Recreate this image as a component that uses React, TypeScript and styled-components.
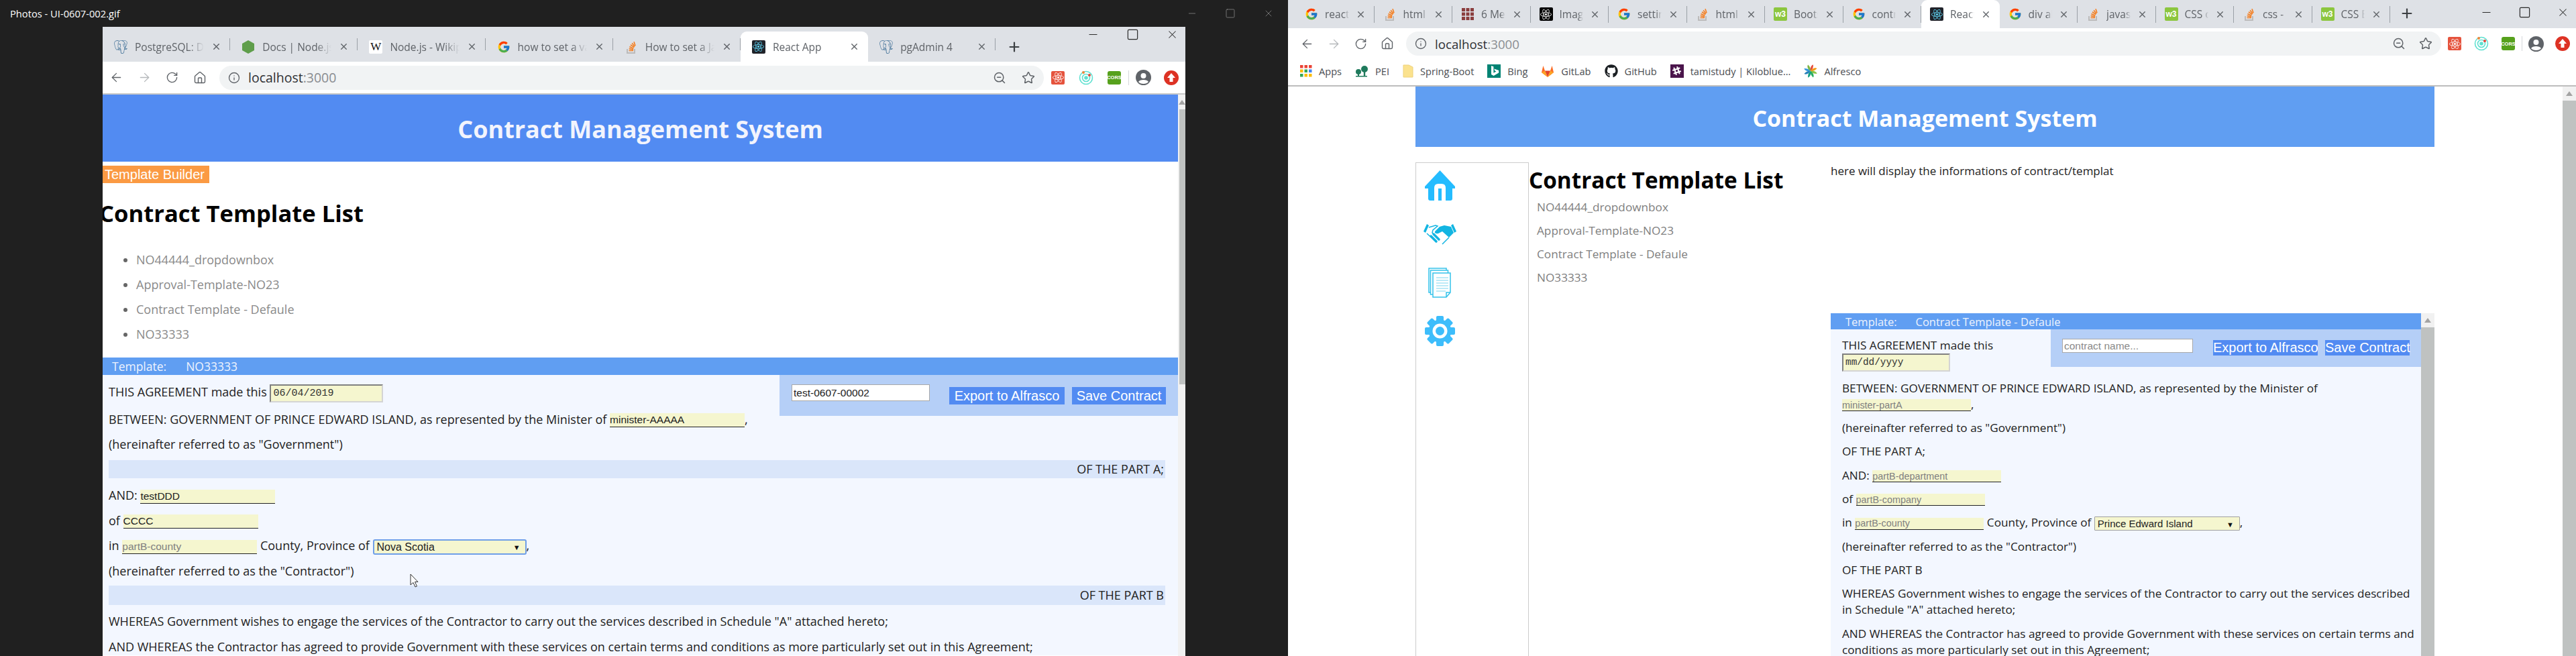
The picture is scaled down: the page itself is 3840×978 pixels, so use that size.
import React from 'react';
import styled, { createGlobalStyle } from 'styled-components';
import { ArrowLeft, ArrowRight, Home, Info, Minus, Plus, RotateCw, Square, Star, X, ZoomOut } from 'lucide-react';
import { FaGithub, FaReact, FaSlackHash } from 'react-icons/fa';
import { FcGoogle } from 'react-icons/fc';
import { SiPostgresql } from 'react-icons/si';

const UI_FONT = '"Open Sans", "Noto Sans", sans-serif';
const FORM_FONT = '"Liberation Sans", Arial, sans-serif';

const GlobalStyle = createGlobalStyle`
  html, body {
    margin: 0;
    overflow: hidden;
    background: #202020;
  }
  * {
    box-sizing: border-box;
  }
`;

const Screen = styled.div`
  display: flex;
  width: 3840px;
  height: 978px;
  overflow: hidden;
  font-family: ${UI_FONT};
`;

const Desktop = styled.div<{ $dark?: boolean }>`
  display: flex;
  flex-direction: column;
  width: 1920px;
  height: 978px;
  overflow: hidden;
  background: ${(p) => (p.$dark ? '#202020' : '#ffffff')};
`;

/* ---- viewer title bar ---- */
const PhotoBar = styled.div`
  display: flex;
  align-items: center;
  flex: none;
  height: 40px;
  padding: 0 21px 0 15px;
  color: #ffffff;
  font-size: 14.7px;
`;

const PhotoTitle = styled.span`
  flex: 1;
`;

const PhotoControls = styled.div`
  display: flex;
  gap: 41px;
  color: #9a9a9a;
`;

const BrowserFrame = styled.div`
  display: flex;
  flex: 1;
  flex-direction: column;
  min-height: 0;
  width: 1614px;
  margin-left: 153px;
  background: #ffffff;
`;

/* ---- tab strip ---- */
const TabStrip = styled.div<{ $wide?: boolean }>`
  display: flex;
  align-items: flex-end;
  flex: none;
  height: ${(p) => (p.$wide ? '42px' : '52px')};
  padding-left: ${(p) => (p.$wide ? '12px' : '0')};
  background: #dee1e6;
`;

const Tab = styled.div<{ $active?: boolean; $w: number; $compact?: boolean }>`
  position: relative;
  display: flex;
  align-items: center;
  flex: none;
  width: ${(p) => p.$w}px;
  height: ${(p) => (p.$compact ? '42px' : '45px')};
  padding: 0 13px 0 ${(p) => (p.$compact ? '13px' : '17px')};
  gap: ${(p) => (p.$compact ? '10px' : '11px')};
  border-radius: 9px 9px 0 0;
  background: ${(p) => (p.$active ? '#ffffff' : 'transparent')};
  color: #5f6368;
  font-size: 15.5px;

  &::after {
    content: ${(p) => (p.$active ? 'none' : '""')};
    position: absolute;
    right: 0;
    top: ${(p) => (p.$compact ? '9px' : '10px')};
    bottom: ${(p) => (p.$compact ? '8px' : '17px')};
    width: 1px;
    background: #9aa0a6;
  }
`;

const TabLabel = styled.span`
  flex: 1;
  min-width: 0;
  overflow: hidden;
  white-space: nowrap;
  -webkit-mask-image: linear-gradient(to right, #000 78%, transparent 100%);
  mask-image: linear-gradient(to right, #000 78%, transparent 100%);
`;

const TabIcon = styled.span`
  display: flex;
  align-items: center;
  justify-content: center;
  flex: none;
  width: 20px;
  height: 20px;
`;

const NewTab = styled.span<{ $left: number }>`
  display: flex;
  align-items: center;
  justify-content: center;
  flex: none;
  width: 46px;
  height: 45px;
  margin-left: ${(p) => p.$left}px;
  color: #3c4043;
`;

const WindowControls = styled.div<{ $top: number; $gap: number }>`
  display: flex;
  align-items: center;
  align-self: flex-start;
  gap: ${(p) => p.$gap}px;
  margin: ${(p) => p.$top}px 10px 0 auto;
  color: #2b2b2b;
`;

/* ---- address bar ---- */
const Toolbar = styled.div<{ $pad: number; $border?: boolean }>`
  display: flex;
  align-items: center;
  flex: none;
  height: ${(p) => (p.$border ? '49px' : '46px')};
  padding-left: ${(p) => p.$pad}px;
  background: #ffffff;
  border-bottom: ${(p) => (p.$border ? '2px solid #c8c8c8' : 'none')};
`;

const NavButton = styled.span<{ $w: number; $faded?: boolean }>`
  display: flex;
  align-items: center;
  justify-content: center;
  flex: none;
  width: ${(p) => p.$w}px;
  color: ${(p) => (p.$faded ? '#b5b8bb' : '#5f6368')};
`;

const Omnibox = styled.div<{ $left: number }>`
  display: flex;
  align-items: center;
  flex: 1;
  height: 36px;
  margin-left: ${(p) => p.$left}px;
  padding: 0 13px;
  gap: 12px;
  border-radius: 18px;
  background: #f1f3f4;
  color: #5f6368;
`;

const UrlText = styled.span<{ $fs: number }>`
  flex: 1;
  color: #8a8d91;
  font-size: ${(p) => p.$fs}px;
  b {
    color: #303134;
    font-weight: 400;
  }
`;

const OmniActions = styled.span<{ $gap: number }>`
  display: flex;
  align-items: center;
  gap: ${(p) => p.$gap}px;
`;

const ExtensionSlot = styled.span<{ $w: number }>`
  display: flex;
  align-items: center;
  justify-content: center;
  flex: none;
  width: ${(p) => p.$w}px;
`;

const ToolbarDivider = styled.span`
  flex: none;
  width: 1px;
  height: 22px;
  background: #d5d7da;
`;

/* ---- bookmarks ---- */
const BookmarkBar = styled.div`
  display: flex;
  align-items: center;
  flex: none;
  gap: 20px;
  height: 41px;
  padding: 0 0 4px 18px;
  border-bottom: 2px solid #bdbdbd;
  color: #4a4d51;
  font-size: 14.6px;
`;

const Bookmark = styled.span`
  display: flex;
  align-items: center;
  gap: 10px;
`;

/* ---- page ---- */
const PageRow = styled.div`
  display: flex;
  flex: 1;
  min-height: 0;
`;

const PageContent = styled.div<{ $gutter?: number }>`
  position: relative;
  flex: 1;
  min-width: 0;
  overflow: hidden;
  padding-left: ${(p) => p.$gutter || 0}px;
`;

const Scrollbar = styled.div<{ $w: number }>`
  display: flex;
  flex-direction: column;
  flex: none;
  width: ${(p) => p.$w}px;
  background: #f1f1f1;
`;

const ScrollArrow = styled.span<{ $h: number }>`
  display: flex;
  align-items: center;
  justify-content: center;
  flex: none;
  height: ${(p) => p.$h}px;
  &::before {
    content: '';
    border-left: 5px solid transparent;
    border-right: 5px solid transparent;
    border-bottom: 7px solid #a3a3a3;
  }
`;

const ScrollThumb = styled.span<{ $h?: number; $inset?: number }>`
  flex: ${(p) => (p.$h ? 'none' : '1')};
  height: ${(p) => (p.$h ? `${p.$h}px` : 'auto')};
  margin-left: ${(p) => p.$inset || 0}px;
  background: #bfc2c1;
`;

const SiteHeader = styled.header<{ $h: number; $bg: string; $w?: number; $fs: number; $ink: string }>`
  display: flex;
  align-items: center;
  justify-content: center;
  height: ${(p) => p.$h}px;
  width: ${(p) => (p.$w ? `${p.$w}px` : 'auto')};
  padding-top: 3px;
  background: ${(p) => p.$bg};
  color: ${(p) => p.$ink};
  font-size: ${(p) => p.$fs}px;
  font-weight: 700;
`;

const BuilderTag = styled.div`
  display: flex;
  align-items: center;
  width: 159px;
  height: 26px;
  margin-top: 6px;
  padding-left: 3px;
  background: #fb9a43;
  color: #ffffff;
  font-family: ${FORM_FONT};
  font-size: 20px;
`;

const ListTitle = styled.h1<{ $fs: number }>`
  margin: 0;
  color: #000000;
  font-size: ${(p) => p.$fs}px;
  font-weight: 700;
  line-height: 40px;
  white-space: nowrap;
`;

const DarkTitle = styled(ListTitle)`
  margin: 25px 0 0 -5px;
`;

const BulletList = styled.ul`
  margin: 31px 0 16px;
  padding: 0 0 0 50px;
  list-style: disc;
  color: #8a8a8a;
  font-size: 18px;
  li {
    height: 37px;
    line-height: 37px;
  }
  li::marker {
    color: #666666;
  }
`;

const PlainList = styled.ul`
  margin: 2.5px 0 0;
  padding: 0 0 0 12px;
  list-style: none;
  color: #808080;
  font-size: 17.2px;
  li {
    height: 35px;
    line-height: 35px;
  }
`;

const TemplateBar = styled.div<{ $h: number; $pad: number; $gap: number; $fs: number }>`
  display: flex;
  align-items: center;
  gap: ${(p) => p.$gap}px;
  height: ${(p) => p.$h}px;
  padding-left: ${(p) => p.$pad}px;
  background: #609ef2;
  color: #eef3fd;
  font-size: ${(p) => p.$fs}px;
  white-space: pre;
`;

const Sheet = styled.div<{ $fs: number; $lh: number; $gap: number; $pad: string }>`
  padding: ${(p) => p.$pad};
  background: #f3f7ff;
  color: #222222;
  font-size: ${(p) => p.$fs}px;
  line-height: ${(p) => p.$lh}px;

  p {
    margin: 0 0 ${(p) => p.$gap}px;
  }
`;

const LeadLine = styled.p`
  && {
    margin-bottom: 15px;
  }
`;

const ExportPanel = styled.div<{ $w: number; $h: number; $margin: string; $pad: string }>`
  float: right;
  display: flex;
  align-items: flex-start;
  width: ${(p) => p.$w}px;
  height: ${(p) => p.$h}px;
  margin: ${(p) => p.$margin};
  padding: ${(p) => p.$pad};
  background: #b5cff7;
`;

const NameInput = styled.input<{ $w: number; $h: number }>`
  flex: none;
  width: ${(p) => p.$w}px;
  height: ${(p) => p.$h}px;
  padding: 0 2px;
  border: 1px solid #a9a9a9;
  background: #ffffff;
  color: #222222;
  font-family: ${FORM_FONT};
  font-size: 15.5px;
  &::placeholder {
    color: #8a8a8a;
  }
`;

const ActionButton = styled.button<{ $w: number; $h: number; $left: number; $top: number }>`
  flex: none;
  width: ${(p) => p.$w}px;
  height: ${(p) => p.$h}px;
  margin: ${(p) => p.$top}px 0 0 ${(p) => p.$left}px;
  padding: 0;
  border: none;
  background: #528bf2;
  color: #ffffff;
  font-family: ${FORM_FONT};
  font-size: 20px;
  white-space: nowrap;
`;

const DateField = styled.input<{ $w: number; $fs: number }>`
  width: ${(p) => p.$w}px;
  height: 27px;
  margin: -2px 0;
  padding: 0 3px;
  vertical-align: middle;
  border: 2px inset #d4d4d4;
  background: #f5f6cf;
  color: #333333;
  font-family: "Liberation Mono", monospace;
  font-size: ${(p) => p.$fs}px;
`;

const BlankField = styled.input<{ $w: number; $small?: boolean }>`
  width: ${(p) => p.$w}px;
  height: ${(p) => (p.$small ? '18px' : '21px')};
  margin: -3px 0;
  padding: 0;
  vertical-align: middle;
  border: none;
  border-bottom: 1px solid #222222;
  background: #f5f6cf;
  color: #222222;
  font-family: ${FORM_FONT};
  font-size: ${(p) => (p.$small ? '14.4px' : '15.5px')};
  &::placeholder {
    color: #808080;
  }
`;

const SelectWrap = styled.span`
  position: relative;
  display: inline-block;
  margin: -3px 0;
  vertical-align: middle;
  line-height: 0;
  &::after {
    content: '▼';
    position: absolute;
    right: 9px;
    top: 50%;
    transform: translateY(-50%);
    color: #111111;
    font-size: 11px;
    line-height: 1;
    pointer-events: none;
  }
`;

const ProvinceSelect = styled.select<{ $w: number; $h: number; $fs: number; $focus?: boolean }>`
  appearance: none;
  width: ${(p) => p.$w}px;
  height: ${(p) => p.$h}px;
  padding: 0 4px;
  border: ${(p) => (p.$focus ? '2px solid #6f9fe8' : '1px solid #a0a0a0')};
  border-radius: ${(p) => (p.$focus ? '3px' : '1px')};
  background: #f5f6cf;
  color: #222222;
  font-family: ${FORM_FONT};
  font-size: ${(p) => p.$fs}px;
`;

const PartStrip = styled.div<{ $h: number; $top: number; $gap: number }>`
  display: flex;
  align-items: center;
  justify-content: flex-end;
  height: ${(p) => p.$h}px;
  margin: ${(p) => p.$top}px 0 ${(p) => p.$gap}px;
  padding-right: 2px;
  background: #dae6fa;
`;

const Pointer = styled.svg`
  position: absolute;
  left: 458px;
  top: 714px;
`;

/* ---- right hand page ---- */
const PageBody = styled.div`
  display: flex;
  width: 1519px;
  margin-top: 23px;
`;

const SideNav = styled.nav`
  flex: none;
  width: 169px;
  height: 760px;
  border: 1px solid #cccccc;
  border-bottom: none;
`;

const SideItem = styled.span`
  display: flex;
  align-items: center;
  justify-content: center;
  width: 70px;
  height: 72.5px;
  &:first-child {
    margin-top: -3px;
  }
`;

const ListColumn = styled.section`
  flex: none;
  width: 450px;
  padding-top: 6px;
`;

const DetailColumn = styled.section`
  flex: 1;
  min-width: 0;
`;

const DetailNote = styled.div`
  height: 225px;
  color: #222222;
  font-size: 17px;
  line-height: 26px;
`;

const DetailFrame = styled.div`
  display: flex;
  height: 520px;
`;

const DetailPanel = styled.div`
  flex: 1;
  min-width: 0;
`;

/* ---- favicon set ---- */
const FaviconBox = styled.span<{ $bg: string; $ink?: string; $round?: number }>`
  display: flex;
  align-items: center;
  justify-content: center;
  width: 20px;
  height: 20px;
  overflow: hidden;
  border-radius: ${(p) => p.$round ?? 2}px;
  background: ${(p) => p.$bg};
  color: ${(p) => p.$ink || '#ffffff'};
`;

const WikiLetter = styled.span`
  color: #111111;
  font-family: "Liberation Serif", serif;
  font-size: 17px;
`;

const W3Letter = styled.span`
  font-family: ${FORM_FONT};
  font-size: 12px;
  font-weight: 700;
`;

const CorsLetter = styled.span`
  font-family: ${FORM_FONT};
  font-size: 7.5px;
  font-weight: 700;
`;

const Hexagon = () => (
  <svg width="20" height="20" viewBox="0 0 20 20"><path d="M10 0l9 5v10l-9 5-9-5V5z" fill="#5f9e4b" /></svg>
);
const Stack = () => (
  <svg width="20" height="20" viewBox="0 0 20 20">
    <path d="M4 13v6h11v-6" fill="none" stroke="#bcbbbb" strokeWidth="2" />
    <path d="M6.500 15.500h6.500M6.700 12.600l6.400 1.200M7.400 9.600l6 2.600M9 6.800l5.300 3.800M11.200 4.300l3.800 5.100M14 2.300l2 6" stroke="#f48024" strokeWidth="1.700" />
  </svg>
);
const Waffle = () => (
  <svg width="20" height="20" viewBox="0 0 20 20" fill="#8a3d3d">
    {[1, 7.5, 14].flatMap((x) => [1, 7.5, 14].map((y) => <rect key={`${x}-${y}`} x={x} y={y} width="5" height="5" />))}
  </svg>
);
const AppsGrid = () => {
  const tints = ['#ea4335', '#ea4335', '#ea4335', '#fbbc05', '#34a853', '#4285f4', '#34a853', '#fbbc05', '#fbbc05'];
  return (
    <svg width="18" height="18" viewBox="0 0 18 18">
      {tints.map((c, i) => <rect key={i} x={(i % 3) * 6.5} y={Math.floor(i / 3) * 6.5} width="4.5" height="4.5" fill={c} />)}
    </svg>
  );
};
const Trees = () => (
  <svg width="20" height="20" viewBox="0 0 20 20" fill="#1f7a5c">
    <circle cx="14" cy="7" r="5" /><rect x="12.800" y="10" width="2.400" height="8" />
    <circle cx="5" cy="11" r="4" /><rect x="4" y="13" width="2" height="5" /><rect x="1" y="17" width="17" height="1.500" />
  </svg>
);
const Folder = () => (
  <svg width="16" height="20" viewBox="0 0 16 20"><path d="M1 1h8l6 3v15H1z" fill="#fbe28e" stroke="#eed27a" /></svg>
);
const BingMark = () => (
  <svg width="20" height="20" viewBox="0 0 20 20">
    <rect width="20" height="20" fill="#008373" />
    <path d="M6 2l3.400 1.200v9.600l4-2.400-2-1-1.200-3 7 2.500v3.500l-7.600 4.600L6 15z" fill="#ffffff" />
  </svg>
);
const GitlabMark = () => (
  <svg width="20" height="20" viewBox="0 0 20 20">
    <path d="M10 19L1 12l2.400-10 2.600 7.500z" fill="#fc6d26" />
    <path d="M10 19l9-7-2.400-10L14 9.500z" fill="#fc6d26" />
    <path d="M10 19L6 9.500h8z" fill="#e24329" />
    <path d="M10 19L1 12l5-2.500zM10 19l9-7-5-2.500z" fill="#fca326" />
  </svg>
);
const Pinwheel = () => {
  const tints = ['#e74c3c', '#f39c12', '#8bc34a', '#27ae60', '#16a085', '#2980b9', '#3498db', '#7cb342'];
  return (
    <svg width="20" height="20" viewBox="-10 -10 20 20">
      {tints.map((c, i) => <path key={i} d="M0 0C-1-5 1-9 4-9.500 4-5 3-2 0 0z" fill={c} transform={`rotate(${i * 45})`} />)}
    </svg>
  );
};
const ReactExt = () => (
  <FaviconBox $bg="#e5533d" $ink="#ffffff"><FaReact size={17} /></FaviconBox>
);
const TargetExt = () => (
  <svg width="22" height="22" viewBox="0 0 22 22" fill="none" stroke="#5fe0d0" strokeWidth="1.600">
    <circle cx="11" cy="11" r="9.500" /><circle cx="11" cy="11" r="5.500" /><circle cx="11" cy="11" r="2" fill="#5fe0d0" />
    <circle cx="7" cy="3" r="2" fill="#f0873a" stroke="none" /><circle cx="16" cy="7" r="2" fill="#e8473a" stroke="none" />
  </svg>
);
const CorsExt = () => (
  <FaviconBox $bg="#56a11c" $round={3}><CorsLetter>CORS</CorsLetter></FaviconBox>
);
const AvatarExt = () => (
  <svg width="23" height="23" viewBox="0 0 23 23">
    <circle cx="11.500" cy="11.500" r="11.500" fill="#5f6368" />
    <circle cx="11.500" cy="9" r="4" fill="#ffffff" />
    <path d="M4 18c2-4 13-4 15 0-3 4-12 4-15 0z" fill="#ffffff" />
  </svg>
);
const UploadExt = () => (
  <svg width="22" height="22" viewBox="0 0 22 22">
    <circle cx="11" cy="11" r="11" fill="#dd3224" />
    <path d="M11 4l6 7h-3.500v6h-5v-6H5z" fill="#ffffff" />
  </svg>
);

const HomeGlyph = () => (
  <svg width="45" height="45" viewBox="0 0 45 45">
    <path d="M22.500 0L45 24v3h-4v15q0 3-3 3H8q-3 0-3-3V27H0v-3z" fill="#24bcff" />
    <path d="M14 45V26q0-6 6-6h5q6 0 6 6v19h-6V27h-5v18z" fill="#ffffff" />
  </svg>
);
const ShakeGlyph = () => (
  <svg width="49" height="32" viewBox="0 0 49 32" fill="#12b5e2">
    <path d="M0 12L5 1l3 2-5 11zM49 12L44 1l-3 2 5 11z" />
    <path d="M24 5l7-2 10 2 4 9-7 7-10-9-6 3q-3 1-5-1v-2z" />
    <path d="M8 6l10-3 3 1-7 6-1 4 3 3M5 15l14 13M38 21L28 31" fill="none" stroke="#12b5e2" strokeWidth="1.500" />
    <path d="M11 19l8 8M15 16l8 8" fill="none" stroke="#12b5e2" strokeWidth="3.500" strokeLinecap="round" />
  </svg>
);
const DocsGlyph = () => (
  <svg width="34" height="45" viewBox="0 0 34 45" fill="#ffffff" stroke="#35c2ea" strokeWidth="1.500">
    <rect x="1" y="1" width="26" height="36" />
    <rect x="3.500" y="4" width="26" height="36" />
    <path d="M7 8h26v29l-6 7H7z" />
    <path d="M12 15h18M12 19h18M12 23h18M12 27h18M12 31h18M12 35h14" stroke="#a6e4f5" strokeWidth="1.300" />
    <path d="M27 44v-7h6" fill="none" />
  </svg>
);
const GearGlyph = () => (
  <svg width="45" height="45" viewBox="0 0 45 45">
    {[0, 45, 90, 135].map((r) => <rect key={r} x="17" y="0" width="11" height="45" rx="2" fill="#3dbdfb" transform={`rotate(${r} 22.500 22.500)`} />)}
    <circle cx="22.500" cy="22.500" r="17" fill="#3dbdfb" />
    <circle cx="22.500" cy="22.500" r="11" fill="#ffffff" />
    <circle cx="22.500" cy="22.500" r="6.500" fill="#3dbdfb" />
  </svg>
);

type TabItem = { label: string; icon: React.ReactNode; active?: boolean };

const google = <FcGoogle size={20} />;
const stack = <Stack />;
const w3 = <FaviconBox $bg="#8cc63f"><W3Letter>w3</W3Letter></FaviconBox>;
const atom = <FaviconBox $bg="#20232a" $ink="#61dafb"><FaReact size={17} /></FaviconBox>;
const atomBlack = <FaviconBox $bg="#000000"><FaReact size={17} /></FaviconBox>;
const elephant = <SiPostgresql size={20} color="#336791" />;

const leftTabs: TabItem[] = [
  { label: 'PostgreSQL: Documentation', icon: elephant },
  { label: 'Docs | Node.js', icon: <Hexagon /> },
  { label: 'Node.js - Wikipedia', icon: <FaviconBox $bg="#ffffff"><WikiLetter>W</WikiLetter></FaviconBox> },
  { label: 'how to set a value', icon: google },
  { label: 'How to set a JavaScript', icon: stack },
  { label: 'React App', icon: atom, active: true },
  { label: 'pgAdmin 4', icon: elephant },
];

const rightTabs: TabItem[] = [
  { label: 'react', icon: google },
  { label: 'html - s', icon: stack },
  { label: '6 Methods', icon: <Waffle /> },
  { label: 'Image', icon: atomBlack },
  { label: 'settings', icon: google },
  { label: 'html - s', icon: stack },
  { label: 'Bootstrap', icon: w3 },
  { label: 'contract', icon: google },
  { label: 'React App', icon: atom, active: true },
  { label: 'div align', icon: google },
  { label: 'javascript', icon: stack },
  { label: 'CSS over', icon: w3 },
  { label: 'css - How', icon: stack },
  { label: 'CSS Box', icon: w3 },
];

const Tabs: React.FC<{ items: TabItem[]; w: number; compact?: boolean }> = ({ items, w, compact }) => (
  <>
    {items.map((t, i) => (
      <Tab key={i} $w={w} $active={t.active} $compact={compact}>
        <TabIcon>{t.icon}</TabIcon>
        <TabLabel>{t.label}</TabLabel>
        <X size={15} strokeWidth={2.2} />
      </Tab>
    ))}
  </>
);

type AddressProps = { pad: number; nav: number; ext: number; gap: number; url: number; border?: boolean };

const Address: React.FC<AddressProps> = ({ pad, nav, ext, gap, url, border }) => (
  <Toolbar $pad={pad} $border={border}>
    <NavButton $w={nav}><ArrowLeft size={21} strokeWidth={1.5} /></NavButton>
    <NavButton $w={nav} $faded><ArrowRight size={21} strokeWidth={1.5} /></NavButton>
    <NavButton $w={nav}><RotateCw size={19} strokeWidth={1.7} /></NavButton>
    <NavButton $w={nav}><Home size={20} strokeWidth={1.7} /></NavButton>
    <Omnibox $left={8}>
      <Info size={18} strokeWidth={1.8} />
      <UrlText $fs={url}><b>localhost</b>:3000</UrlText>
      <OmniActions $gap={gap}>
        <ZoomOut size={20} strokeWidth={1.8} />
        <Star size={20} strokeWidth={1.8} />
      </OmniActions>
    </Omnibox>
    <ExtensionSlot $w={ext}><ReactExt /></ExtensionSlot>
    <ExtensionSlot $w={ext}><TargetExt /></ExtensionSlot>
    <ExtensionSlot $w={ext}><CorsExt /></ExtensionSlot>
    <ToolbarDivider />
    <ExtensionSlot $w={ext}><AvatarExt /></ExtensionSlot>
    <ExtensionSlot $w={ext}><UploadExt /></ExtensionSlot>
  </Toolbar>
);

const templateNames = ['NO44444_dropdownbox', 'Approval-Template-NO23', 'Contract Template - Defaule', 'NO33333'];

const LeftWindow: React.FC = () => (
  <Desktop $dark>
    <PhotoBar>
      <PhotoTitle>Photos - UI-0607-002.gif</PhotoTitle>
      <PhotoControls>
        <Minus size={16} strokeWidth={1} />
        <Square size={16} strokeWidth={1} />
        <X size={16} strokeWidth={1} />
      </PhotoControls>
    </PhotoBar>
    <BrowserFrame>
      <TabStrip>
        <Tabs items={leftTabs} w={190.2} />
        <NewTab $left={5}><Plus size={22} strokeWidth={2.4} /></NewTab>
        <WindowControls $top={2} $gap={40}>
          <Minus size={19} strokeWidth={1.5} />
          <Square size={19} strokeWidth={1.5} />
          <X size={19} strokeWidth={1.3} />
        </WindowControls>
      </TabStrip>
      <Address pad={0} nav={41.5} ext={42} gap={23} url={19.5} border />
      <PageRow>
        <PageContent>
          <SiteHeader $h={100} $bg="#528bf2" $fs={36} $ink="#f2f4fd">Contract Management System</SiteHeader>
          <BuilderTag>Template Builder</BuilderTag>
          <DarkTitle $fs={34.6}>Contract Template List</DarkTitle>
          <BulletList>
            {templateNames.map((n) => <li key={n}>{n}</li>)}
          </BulletList>
          <TemplateBar $h={26} $pad={14} $gap={29} $fs={17.5}>
            <span>Template:</span>
            <span>NO33333</span>
          </TemplateBar>
          <Sheet $fs={18} $lh={25} $gap={12.5} $pad="13px 19px 0 9px">
            <ExportPanel $w={594} $h={61} $margin="-13px -19px 0 12px" $pad="14px 0 0 18px">
              <NameInput $w={206} $h={25} defaultValue="test-0607-00002" />
              <ActionButton $w={172} $h={26} $left={29} $top={4}>Export to Alfrasco</ActionButton>
              <ActionButton $w={140} $h={26} $left={11} $top={4}>Save Contract</ActionButton>
            </ExportPanel>
            <LeadLine>THIS AGREEMENT made this <DateField $w={169} $fs={15} defaultValue="06/04/2019" /></LeadLine>
            <p>BETWEEN: GOVERNMENT OF PRINCE EDWARD ISLAND, as represented by the Minister of <BlankField $w={201} defaultValue="minister-AAAAA" />,</p>
            <p>(hereinafter referred to as "Government")</p>
            <PartStrip $h={27} $top={-2} $gap={13.5}>OF THE PART A;</PartStrip>
            <p>AND: <BlankField $w={201} defaultValue="testDDD" /></p>
            <p>of <BlankField $w={201} defaultValue="CCCC" /></p>
            <p>in <BlankField $w={201} placeholder="partB-county" /> County, Province of{' '}
              <SelectWrap>
                <ProvinceSelect $w={229} $h={23} $fs={16} $focus defaultValue="Nova Scotia">
                  <option>Nova Scotia</option>
                </ProvinceSelect>
              </SelectWrap>,
            </p>
            <p>(hereinafter referred to as the "Contractor")</p>
            <PartStrip $h={29} $top={-3.5} $gap={12.5}>OF THE PART B</PartStrip>
            <p>WHEREAS Government wishes to engage the services of the Contractor to carry out the services described in Schedule "A" attached hereto;</p>
            <p>AND WHEREAS the Contractor has agreed to provide Government with these services on certain terms and conditions as more particularly set out in this Agreement;</p>
          </Sheet>
          <Pointer width="13" height="21" viewBox="0 0 13 21">
            <path d="M1 1v16l4-3.500 3 6.500 2.500-1-3-6.500H12z" fill="#ffffff" stroke="#333333" />
          </Pointer>
        </PageContent>
        <Scrollbar $w={11}>
          <ScrollArrow $h={22} />
          <ScrollThumb $h={410} $inset={2} />
        </Scrollbar>
      </PageRow>
    </BrowserFrame>
  </Desktop>
);

const RightWindow: React.FC = () => (
  <Desktop>
    <TabStrip $wide>
      <Tabs items={rightTabs} w={116.5} compact />
      <NewTab $left={2}><Plus size={22} strokeWidth={2.4} /></NewTab>
      <WindowControls $top={9} $gap={38}>
        <Minus size={19} strokeWidth={1.5} />
        <Square size={19} strokeWidth={1.5} />
        <X size={19} strokeWidth={1.3} />
      </WindowControls>
    </TabStrip>
    <Address pad={8} nav={40} ext={40} gap={20} url={18.7} />
    <BookmarkBar>
      <Bookmark><AppsGrid />Apps</Bookmark>
      <Bookmark><Trees />PEI</Bookmark>
      <Bookmark><Folder />Spring-Boot</Bookmark>
      <Bookmark><BingMark />Bing</Bookmark>
      <Bookmark><GitlabMark />GitLab</Bookmark>
      <Bookmark><FaGithub size={20} color="#1b1f23" />GitHub</Bookmark>
      <Bookmark><FaviconBox $bg="#4a154b" $round={0}><FaSlackHash size={15} /></FaviconBox>tamistudy | Kiloblue...</Bookmark>
      <Bookmark><Pinwheel />Alfresco</Bookmark>
    </BookmarkBar>
    <PageRow>
      <PageContent $gutter={190}>
        <SiteHeader $h={90} $w={1519} $bg="#609ef2" $fs={34} $ink="#ffffff">Contract Management System</SiteHeader>
        <PageBody>
          <SideNav>
            <SideItem><HomeGlyph /></SideItem>
            <SideItem><ShakeGlyph /></SideItem>
            <SideItem><DocsGlyph /></SideItem>
            <SideItem><GearGlyph /></SideItem>
          </SideNav>
          <ListColumn>
            <ListTitle $fs={33.3}>Contract Template List</ListTitle>
            <PlainList>
              {templateNames.map((n) => <li key={n}>{n}</li>)}
            </PlainList>
          </ListColumn>
          <DetailColumn>
            <DetailNote>here will display the informations of contract/templat</DetailNote>
            <DetailFrame>
              <DetailPanel>
                <TemplateBar $h={24} $pad={22} $gap={28} $fs={16.5}>
                  <span>Template:</span>
                  <span>Contract Template - Defaule</span>
                </TemplateBar>
                <Sheet $fs={17.2} $lh={24} $gap={11.3} $pad="12px 8px 0 17px">
                  <ExportPanel $w={552} $h={56} $margin="-12px -8px 0 12px" $pad="14px 0 0 17px">
                    <NameInput $w={195} $h={21} placeholder="contract name..." />
                    <ActionButton $w={156} $h={23} $left={30} $top={2}>Export to Alfrasco</ActionButton>
                    <ActionButton $w={126} $h={23} $left={11} $top={2}>Save Contract</ActionButton>
                  </ExportPanel>
                  <LeadLine>THIS AGREEMENT made this <DateField $w={161} $fs={14.4} defaultValue="mm/dd/yyyy" /></LeadLine>
                  <p>BETWEEN: GOVERNMENT OF PRINCE EDWARD ISLAND, as represented by the Minister of <BlankField $w={192} $small placeholder="minister-partA" />,</p>
                  <p>(hereinafter referred to as "Government")</p>
                  <p>OF THE PART A;</p>
                  <p>AND: <BlankField $w={192} $small placeholder="partB-department" /></p>
                  <p>of <BlankField $w={192} $small placeholder="partB-company" /></p>
                  <p>in <BlankField $w={192} $small placeholder="partB-county" /> County, Province of{' '}
                    <SelectWrap>
                      <ProvinceSelect $w={217} $h={21} $fs={15} defaultValue="Prince Edward Island">
                        <option>Prince Edward Island</option>
                      </ProvinceSelect>
                    </SelectWrap>,
                  </p>
                  <p>(hereinafter referred to as the "Contractor")</p>
                  <p>OF THE PART B</p>
                  <p>WHEREAS Government wishes to engage the services of the Contractor to carry out the services described in Schedule "A" attached hereto;</p>
                  <p>AND WHEREAS the Contractor has agreed to provide Government with these services on certain terms and conditions as more particularly set out in this Agreement;</p>
                </Sheet>
              </DetailPanel>
              <Scrollbar $w={20}>
                <ScrollArrow $h={21} />
                <ScrollThumb />
              </Scrollbar>
            </DetailFrame>
          </DetailColumn>
        </PageBody>
      </PageContent>
      <Scrollbar $w={20}>
        <ScrollArrow $h={21} />
        <ScrollThumb />
      </Scrollbar>
    </PageRow>
  </Desktop>
);

const App: React.FC = () => (
  <Screen>
    <GlobalStyle />
    <LeftWindow />
    <RightWindow />
  </Screen>
);

export default App;
